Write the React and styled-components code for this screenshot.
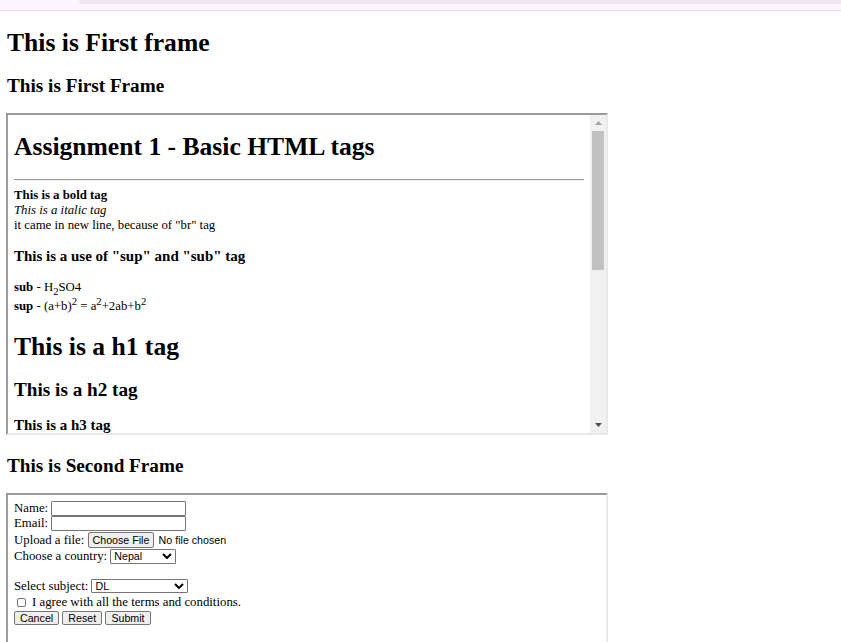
import React from 'react';
import styled, { createGlobalStyle } from 'styled-components';

const GlobalStyle = createGlobalStyle`
  html, body {
    margin: 0;
    padding: 0;
    overflow: hidden;
    background: #ffffff;
  }
  body {
    font-family: "Liberation Serif", "Times New Roman", serif;
    color: #000000;
  }
`;

const TopStrip = styled.div`
  height: 10px;
  background: #fdf6fe;
  border-bottom: 1px solid #e6dee8;
`;

const TabEdge = styled.div`
  margin-left: 79px;
  height: 4px;
  background: #efe7f1;
  border-bottom-left-radius: 6px;
`;

const Page = styled.div`
  padding: 0 6px;
`;

const PageTitle = styled.h1`
  font-size: 25.6px;
  font-weight: bold;
  margin: 17.15px 0;
  padding-left: 1px;
`;

const FrameHeading = styled.h2`
  font-size: 19.2px;
  font-weight: bold;
  margin: 15.9px 0;
  padding-left: 1px;
`;

const Frame = styled.div`
  display: flex;
  box-sizing: border-box;
  width: 602px;
  height: ${(p) => p.$h || 322}px;
  margin-bottom: 20px;
  border-style: solid;
  border-width: 2px;
  border-color: #9b9b9b #e9e9e9 #e9e9e9 #9b9b9b;
  background: #ffffff;
`;

const FrameBody = styled.div`
  flex: 1;
  overflow: hidden;
  padding: ${(p) => p.$pad || '0 6px'};
  font-size: 12.8px;
`;

const Scrollbar = styled.div`
  flex: none;
  width: 16px;
  display: flex;
  flex-direction: column;
  background: #f1f1f1;
`;

const ScrollButton = styled.div`
  height: 16px;
  display: flex;
  align-items: center;
  justify-content: center;
`;

const Thumb = styled.div`
  height: 139px;
  margin: 0 2px;
  background: #c1c1c1;
`;

const Track = styled.div`
  flex: 1;
`;

const DocTitle = styled.h1`
  font-size: 2em;
  font-weight: bold;
  margin: 0.67em 0;
`;

const DocSubtitle = styled.h2`
  font-size: 1.5em;
  font-weight: bold;
  margin: 0.83em 0;
`;

const DocHeading = styled.h3`
  font-size: 1.17em;
  font-weight: bold;
  margin: 1em 0;
`;

const DocMinor = styled.h4`
  font-size: ${(p) => p.$size || '1em'};
  font-weight: bold;
  margin: ${(p) => p.$margin || '1.33em'} 0;
`;

const Rule = styled.hr`
  margin: 0.5em 0;
  height: 0;
  border: none;
  border-top: 1px solid #9a9a9a;
  border-bottom: 1px solid #eeeeee;
`;

const Lines = styled.div`
  line-height: normal;
`;

const Para = styled.p`
  margin: 1em 0;
`;

const Sub = styled.sub`
  font-size: smaller;
  vertical-align: sub;
`;

const Sup = styled.sup`
  font-size: smaller;
  vertical-align: super;
`;

const Row = styled.div`
  display: flex;
  align-items: center;
  gap: ${(p) => (p.$gap === undefined ? 3.2 : p.$gap)}px;
  height: ${(p) => p.$h}px;
  white-space: nowrap;
`;

const TextBox = styled.input`
  box-sizing: border-box;
  width: 135px;
  height: 15px;
  margin: 0;
  padding: 0 2px;
  border: 1px solid #767676;
  border-radius: 1px;
  font: 10.67px "Liberation Sans", Arial, sans-serif;
  background: #ffffff;
`;

const Button = styled.button`
  box-sizing: border-box;
  height: ${(p) => p.$h || 14}px;
  margin: 0;
  padding: 0 ${(p) => p.$px || 5}px;
  border: 1px solid #767676;
  border-radius: 2px;
  background: #efefef;
  color: #000000;
  font: 10.67px "Liberation Sans", Arial, sans-serif;
  line-height: 1;
`;

const FileNote = styled.span`
  font: 10.67px "Liberation Sans", Arial, sans-serif;
  margin-left: 1px;
`;

const SelectBox = styled.div`
  box-sizing: border-box;
  width: ${(p) => p.$w}px;
  height: ${(p) => p.$h || 15}px;
  display: flex;
  align-items: center;
  justify-content: space-between;
  padding: 0 3px;
  border: 1px solid #767676;
  border-radius: 1px;
  background: #ffffff;
  font: 10.67px "Liberation Sans", Arial, sans-serif;
`;

const CheckBox = styled.span`
  box-sizing: border-box;
  width: 9px;
  height: 9px;
  margin: 0 3px;
  border: 1px solid #767676;
  border-radius: 2px;
  background: #ffffff;
`;

const Chevron = () => (
  <svg width="10" height="6" viewBox="0 0 10 6">
    <path d="M1 1 L5 5 L9 1" fill="none" stroke="#000" strokeWidth="2" />
  </svg>
);

const Arrow = ({ up, color }) => (
  <svg width="7" height="4" viewBox="0 0 7 4">
    <path d={up ? 'M0 4 L3.5 0 L7 4 Z' : 'M0 0 L3.5 4 L7 0 Z'} fill={color} />
  </svg>
);

const FirstFrame = () => (
  <Frame>
    <FrameBody>
      <DocTitle>Assignment 1 - Basic HTML tags</DocTitle>
      <Rule />
      <Lines>
        <b>This is a bold tag</b>
        <br />
        <i>This is a italic tag</i>
        <br />
        it came in new line, because of "br" tag
      </Lines>
      <DocHeading>This is a use of "sup" and "sub" tag</DocHeading>
      <Para>
        <b>sub</b> - H<Sub>2</Sub>SO4
        <br />
        <b>sup</b> - (a+b)<Sup>2</Sup> = a<Sup>2</Sup>+2ab+b<Sup>2</Sup>
      </Para>
      <DocTitle>This is a h1 tag</DocTitle>
      <DocSubtitle>This is a h2 tag</DocSubtitle>
      <DocHeading>This is a h3 tag</DocHeading>
      <DocMinor>This is a h4 tag</DocMinor>
      <DocMinor $size="0.83em" $margin="1.67em">This is a h5 tag</DocMinor>
      <DocMinor $size="0.67em" $margin="2.33em">This is a h6 tag</DocMinor>
      <Para>This is a paragraph tag.</Para>
    </FrameBody>
    <Scrollbar>
      <ScrollButton>
        <Arrow up color="#a3a3a3" />
      </ScrollButton>
      <Thumb />
      <Track />
      <ScrollButton>
        <Arrow color="#505050" />
      </ScrollButton>
    </Scrollbar>
  </Frame>
);

const SecondFrame = () => (
  <Frame $h={151}>
    <FrameBody $pad="5.5px 6px">
      <Row $h={15}>
        <span>Name:</span>
        <TextBox type="text" />
      </Row>
      <Row $h={16}>
        <span>Email:</span>
        <TextBox type="email" />
      </Row>
      <Row $h={17}>
        <span>Upload a file:</span>
        <Button type="button" $h={16} $px={4}>Choose File</Button>
        <FileNote>No file chosen</FileNote>
      </Row>
      <Row $h={15}>
        <span>Choose a country:</span>
        <SelectBox $w={66}>
          <span>Nepal</span>
          <Chevron />
        </SelectBox>
      </Row>
      <Row $h={15} />
      <Row $h={15}>
        <span>Select subject:</span>
        <SelectBox $w={97} $h={14}>
          <span>DL</span>
          <Chevron />
        </SelectBox>
      </Row>
      <Row $h={17} $gap={3}>
        <CheckBox />
        <span>I agree with all the terms and conditions.</span>
      </Row>
      <Row $h={15}>
        <Button type="button">Cancel</Button>
        <Button type="reset">Reset</Button>
        <Button type="submit">Submit</Button>
      </Row>
    </FrameBody>
  </Frame>
);

const App = () => (
  <>
    <GlobalStyle />
    <TopStrip>
      <TabEdge />
    </TopStrip>
    <Page>
      <PageTitle>This is First frame</PageTitle>
      <FrameHeading>This is First Frame</FrameHeading>
      <FirstFrame />
      <FrameHeading>This is Second Frame</FrameHeading>
      <SecondFrame />
    </Page>
  </>
);

export default App;
